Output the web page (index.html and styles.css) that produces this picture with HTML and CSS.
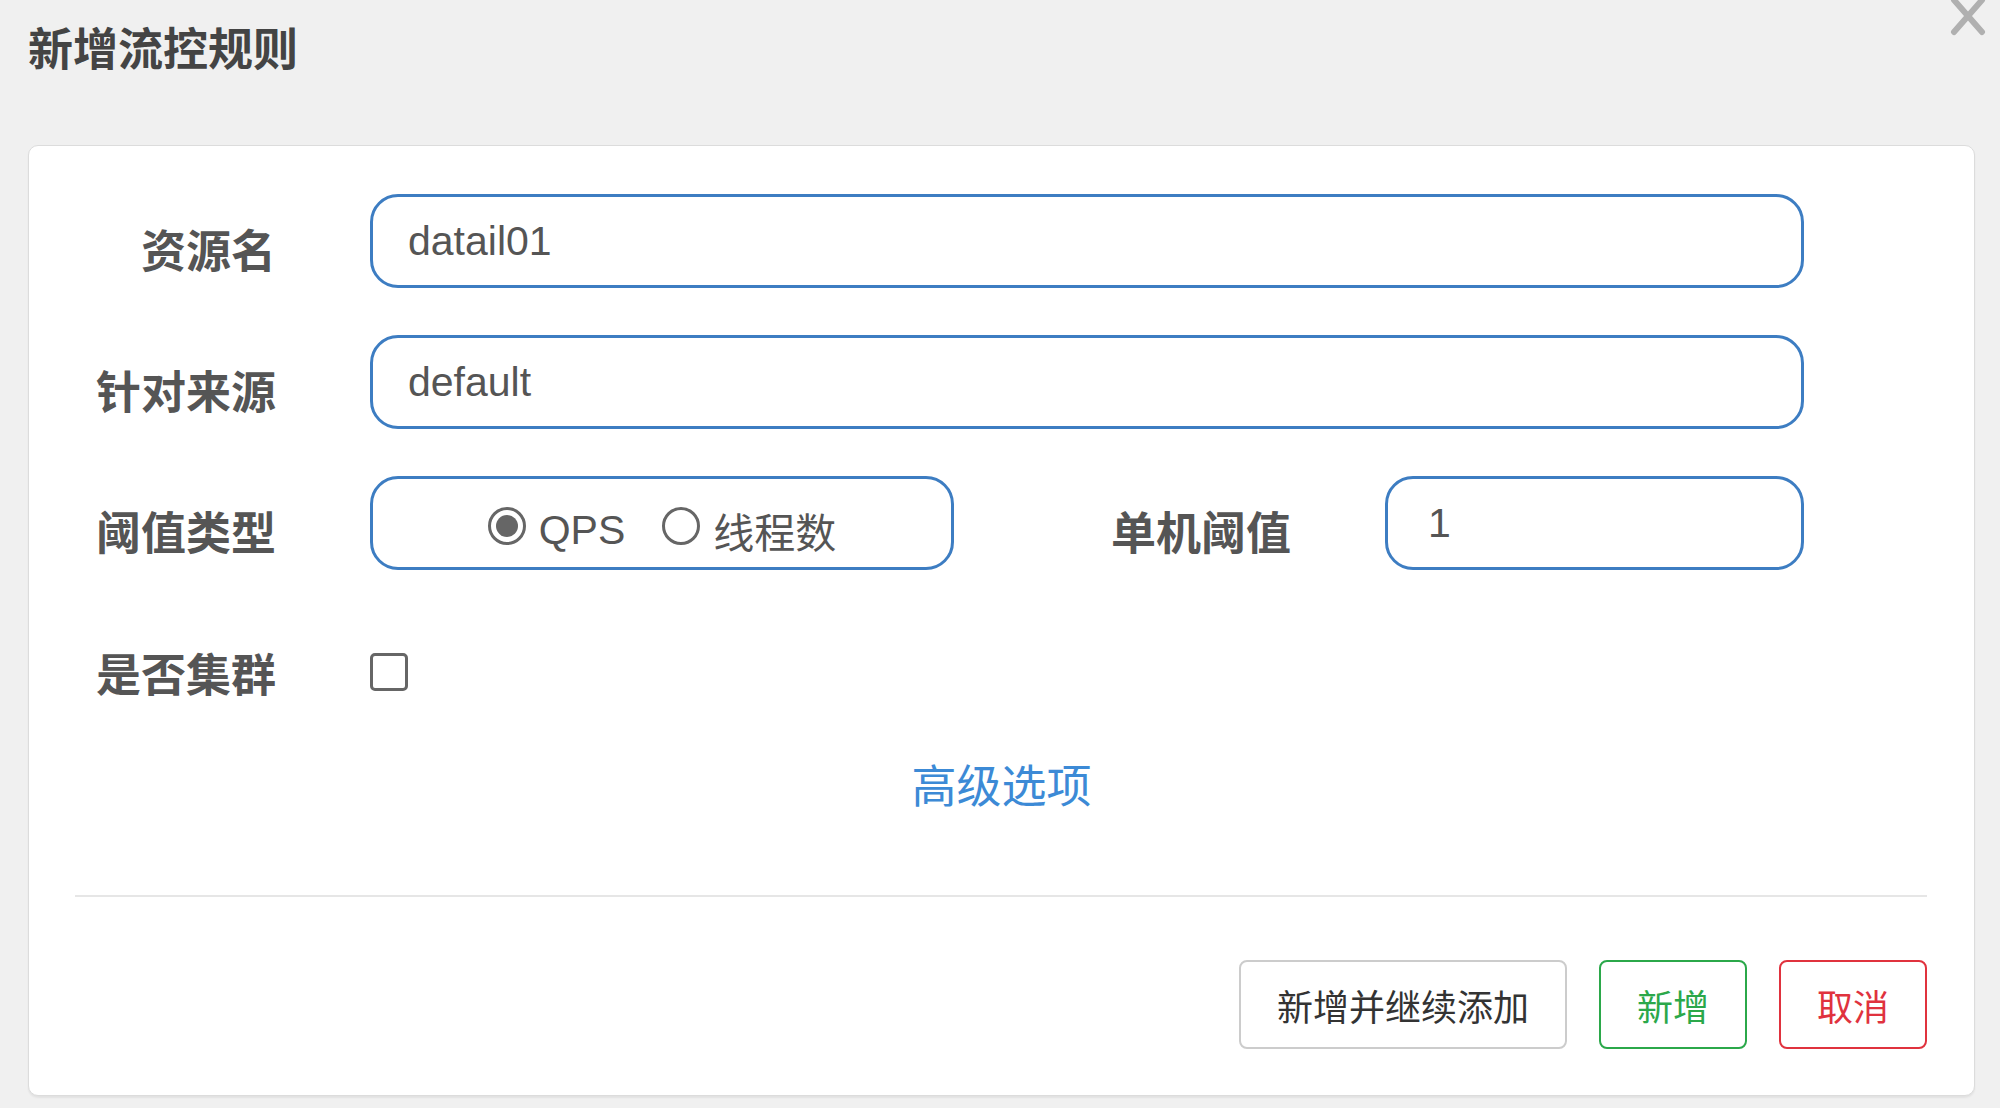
FILE: index.html
```html
<!DOCTYPE html>
<html lang="zh-CN">
<head>
    <meta charset="UTF-8">
    <meta name="viewport" content="width=device-width, initial-scale=1.0">
    <title>新增流控规则</title>
    <link rel="stylesheet" href="styles.css">
</head>
<body>
    <div class="modal">
        <div class="modal-header">
            <h3 class="modal-title">新增流控规则</h3>
            <button class="close" type="button">
                <svg width="36" height="40" viewBox="0 0 36 40">
                    <path d="M4 4 L32 36 M32 4 L4 36" stroke="#b0b0b0" stroke-width="6" stroke-linecap="round" fill="none"/>
                </svg>
            </button>
        </div>

        <div class="modal-body">
            <form class="rule-form">
                <div class="form-row">
                    <label class="form-label">资源名</label>
                    <input class="form-input" type="text" value="datail01">
                </div>
                <div class="form-row">
                    <label class="form-label">针对来源</label>
                    <input class="form-input" type="text" value="default">
                </div>
                <div class="form-row">
                    <label class="form-label">阈值类型</label>
                    <div class="radio-box">
                        <label class="radio"><input type="radio" name="grade" checked><span>QPS</span></label>
                        <label class="radio"><input type="radio" name="grade"><span>线程数</span></label>
                    </div>
                    <label class="form-label form-label-inline">单机阈值</label>
                    <input class="form-input form-input-short" type="text" value="1">
                </div>
                <div class="form-row form-row-check">
                    <label class="form-label">是否集群</label>
                    <input class="checkbox" type="checkbox">
                </div>
                <div class="advanced">
                    <a href="#" class="advanced-link">高级选项</a>
                </div>
            </form>

            <div class="modal-footer">
                <button class="btn btn-default" type="button">新增并继续添加</button>
                <button class="btn btn-success" type="button">新增</button>
                <button class="btn btn-danger" type="button">取消</button>
            </div>
        </div>
    </div>
</body>
</html>
```

FILE: styles.css
```css
* {
    box-sizing: border-box;
}

body {
    margin: 0;
    min-height: 100vh;
    background-color: #f0f0f0;
    font-family: "Liberation Sans", "Noto Sans CJK SC", sans-serif;
    color: #555;
}

.modal {
    position: relative;
    padding: 0 25px 0 28px;
}

.modal-header {
    padding-top: 21px;
    height: 145px;
}

.modal-title {
    margin: 0;
    font-size: 45px;
    line-height: 60px;
    font-weight: bold;
    color: #444;
}

.close {
    position: absolute;
    top: -4px;
    right: 14px;
    padding: 0;
    border: none;
    background: none;
    cursor: pointer;
}

.close svg {
    display: block;
}

.modal-body {
    background-color: #fff;
    border: 1px solid #dcdcdc;
    border-radius: 10px;
    box-shadow: 0 2px 2px rgba(0, 0, 0, 0.06);
    padding: 48px 0 46px 0;
}

.form-row {
    display: flex;
    align-items: center;
    height: 94px;
    margin-bottom: 47px;
    padding-right: 170px;
}

.form-row-check {
    margin-top: 55px;
    margin-bottom: 0;
}

.form-label {
    width: 247px;
    margin-right: 94px;
    flex-shrink: 0;
    text-align: right;
    font-size: 45px;
    font-weight: bold;
    color: #555;
    padding-top: 14px;
}

.form-row-check .form-label {
    padding-top: 0;
}

.form-label-inline {
    width: auto;
    margin-left: 157px;
    margin-right: 94px;
}

.form-input {
    flex: 1;
    min-width: 0;
    width: 100%;
    height: 94px;
    border: 3px solid #3d7dc2;
    border-radius: 28px;
    padding: 0 35px;
    font-family: "Liberation Sans", "Noto Sans CJK SC", sans-serif;
    font-size: 41px;
    color: #555;
    background: #fff;
    outline: none;
}

.form-input-short {
    padding-left: 40px;
}

.radio-box {
    width: 584px;
    height: 94px;
    flex-shrink: 0;
    border: 3px solid #3d7dc2;
    border-radius: 28px;
    display: flex;
    align-items: center;
    justify-content: center;
    gap: 37px;
}

.radio {
    display: flex;
    align-items: center;
    gap: 13px;
    font-size: 41px;
    color: #555;
    padding-top: 6px;
}

.radio span {
    padding-top: 8px;
}

.radio input {
    appearance: none;
    margin: 0;
    width: 38px;
    height: 38px;
    border: 3px solid #666;
    border-radius: 50%;
    background: #fff;
    position: relative;
}

.radio input:checked::after {
    content: "";
    position: absolute;
    top: 5px;
    left: 5px;
    width: 22px;
    height: 22px;
    border-radius: 50%;
    background: #666;
}

.checkbox {
    appearance: none;
    margin: 0;
    width: 38px;
    height: 38px;
    border: 3px solid #666;
    border-radius: 5px;
    background: #fff;
}

.advanced {
    margin-top: 39px;
    text-align: center;
    font-size: 45px;
    line-height: 60px;
    height: 60px;
}

.advanced-link {
    color: #3c8ad6;
    text-decoration: none;
}

.modal-footer {
    margin: 77px 47px 0 46px;
    padding-top: 63px;
    border-top: 2px solid #e6e6e6;
    display: flex;
    justify-content: flex-end;
    gap: 32px;
}

.btn {
    height: 89px;
    padding: 0 36px;
    border: 2px solid #ccc;
    border-radius: 8px;
    background: #fff;
    font-family: "Liberation Sans", "Noto Sans CJK SC", sans-serif;
    font-size: 36px;
    color: #333;
    cursor: pointer;
}

.btn-success {
    border-color: #2ba84a;
    color: #2ba84a;
}

.btn-danger {
    border-color: #e0323e;
    color: #e0323e;
}
```
